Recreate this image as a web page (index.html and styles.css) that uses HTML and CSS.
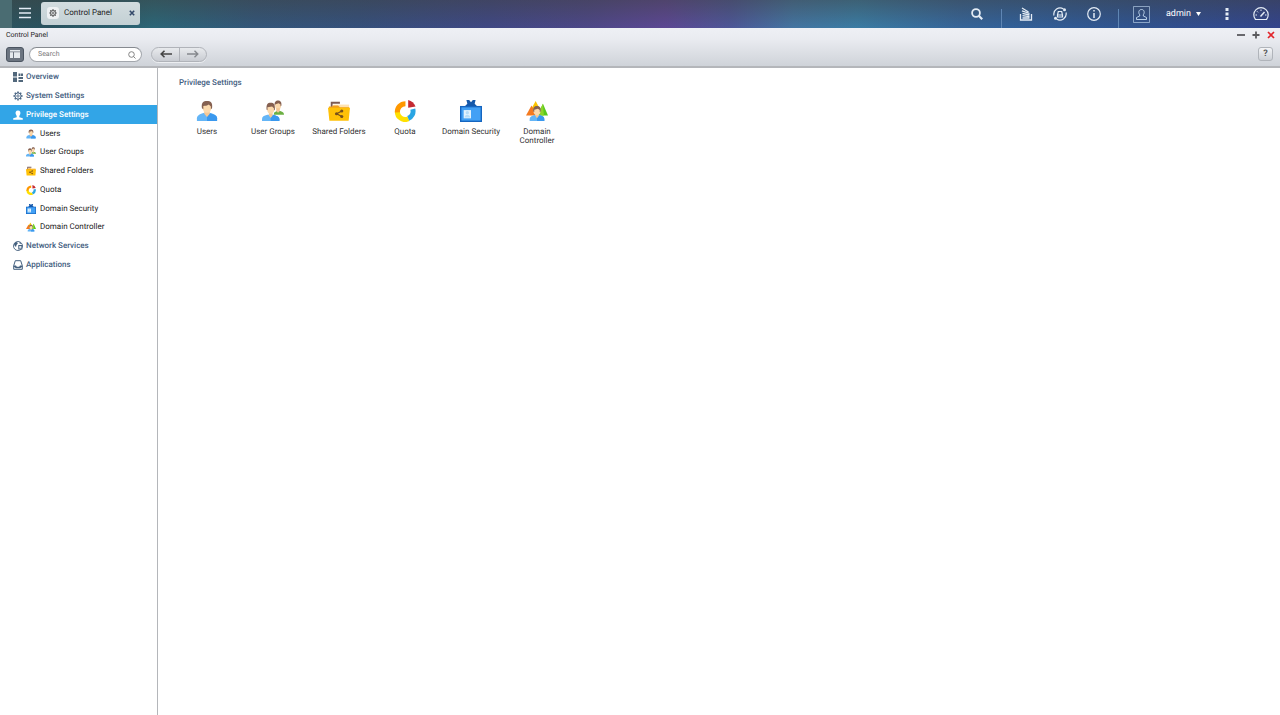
FILE: index.html
```html
<!DOCTYPE html>
<html lang="en">
<head>
<meta charset="utf-8">
<title>Control Panel</title>
<link rel="stylesheet" href="styles.css">
</head>
<body>
<svg class="sprite" aria-hidden="true">
  <symbol id="gear" viewBox="0 0 24 24">
    <g fill="none" stroke="currentColor"><circle cx="12" cy="12" r="7.5" stroke-width="2.4"/><circle cx="12" cy="12" r="2.8" stroke-width="2"/>
    <path stroke-width="3.6" d="M12 1v3.500M12 19.500V23M1 12h3.500M19.500 12H23M4.200 4.200l2.500 2.500M17.300 17.300l2.500 2.500M4.200 19.800l2.500-2.500M17.300 6.700l2.500-2.500"/></g>
  </symbol>
  <symbol id="user" viewBox="0 0 24 24">
    <path fill="#64b5f6" d="M1 23v-3c0-3 3-4.500 8-6h6c5 1.500 8 3 8 6v3z"/>
    <path fill="#3a98ee" d="M12 18l3-3.500c5 1.500 8 2.500 8 5.500v3H12z"/>
    <path fill="#f5c795" d="M9 11h6v4l-3 3.500L9 15z"/>
    <ellipse cx="12" cy="8" rx="5" ry="6" fill="#fbd9ac"/>
    <path fill="#856050" d="M6.500 9C5.500 3 8 1 12 1s6.500 2 5.500 8l-1.300 1V7L14 5c-2 1.500-4 1.300-6 1.500V10z"/>
  </symbol>
  <symbol id="group" viewBox="0 0 24 24">
    <path fill="#6cb043" d="M13 16v-2l3-2h4c3 1 4 2 4 4z"/>
    <ellipse cx="17.500" cy="6" rx="3.300" ry="4.500" fill="#fbd9ac"/><path fill="#f5c795" d="M15.500 9h4v3l-2 2-2-2z"/>
    <path fill="#856050" d="M13.800 6C13.400 2 15 .5 17.500.5S21.600 2 21.200 6l-1 1V5l-2-1.500-3.400 1z"/>
    <path fill="#64b5f6" d="M0 23v-2c0-3 2-4 6-5h6c4 1 7 2 7 5v2z"/><path fill="#3a98ee" d="M9.500 19l2.500-3c4 1 7 2 7 5v2H9.500z"/>
    <path fill="#f5c795" d="M7.500 13h4v4l-2 2.500-2-2.500z"/><ellipse cx="9.500" cy="10" rx="4" ry="5" fill="#fbd9ac"/>
    <path fill="#856050" d="M5 10.500C4.500 5 6 3 9.500 3S14.500 5 14 10.500l-1 1V9l-2-2-5 1v3z"/>
  </symbol>
  <symbol id="folder" viewBox="0 0 24 24">
    <path fill="#7d5b52" d="M3 2h10v2H5v5H3z"/><path fill="#ffe2b0" d="M6 5h17v6H6z"/><path fill="#f2a01e" d="M1 7h4v-1h6l2 2h10v3H1z"/>
    <path fill="#ffc107" d="M0 8.500h24L22.500 22.500h-21z"/>
    <path stroke="#76501c" stroke-width="1.300" d="M15 12L9.500 15l5.500 3" fill="none"/><g fill="#76501c"><circle cx="15" cy="12" r="1.700"/><circle cx="9.300" cy="15" r="1.700"/><circle cx="15" cy="18" r="1.700"/></g>
  </symbol>
  <symbol id="quota" viewBox="0 0 24 24">
    <g fill="none" stroke-width="5.500"><path stroke="#ffe000" d="M3.700 12a8.500 8.500 0 0 0 12 8.500"/><path stroke="#ff9800" d="M3.700 13.500A8.800 8.800 0 0 1 12.500 4"/><path stroke="#29a5e3" d="M15.500 20A8.500 8.500 0 0 0 20.500 10"/></g>
    <path fill="#c42a32" d="M15.500 0a12 12 0 0 1 8 7l-8 1.500z"/>
  </symbol>
  <symbol id="badge" viewBox="0 0 24 24">
    <path fill="#1558aa" d="M7 0h3l2 2.500L14 0h3l-1 4 3 3v2H5V7l3-3z"/><path fill="#1565c0" d="M0 6.500h24V24H0z"/><path fill="#42a0f5" d="M1.500 8h21v14.500h-21z"/>
    <path fill="#e2f2fd" d="M4 11h8v9H4z"/><circle cx="8" cy="13.800" r="1.800" fill="#b6dcf8"/><path fill="#b6dcf8" d="M5 19c0-4 6-4 6 0z"/>
  </symbol>
  <symbol id="domain" viewBox="0 0 24 24">
    <path fill="#fbc400" d="M10.500 1l7.500 14H3z"/><path fill="#f47a20" d="M6 6l6 11H0z"/><path fill="#58c91c" d="M18.500 4L24 17H12z"/><path fill="#8bd52a" d="M14.500 12l4-8 1 13h-5z"/>
    <path fill="#64b5f6" d="M4 23v-2c0-3 3-4 6-5h4c3 1 6 2 6 5v2z"/><path fill="#3a98ee" d="M12 20l3-3.500c4 1 5 2 5 4.500v2h-8z"/><path fill="#f5c795" d="M10 14h4v3l-2 3-2-3z"/>
    <ellipse cx="12" cy="12" rx="3.800" ry="4.500" fill="#fbd9ac"/><path fill="#856050" d="M8 12.500C7.500 8 9 6.500 12 6.500s4.500 1.500 4 6l-1 .5v-2l-2-1.500-4 1v2.500z"/>
  </symbol>
</svg>

<header class="topbar">
  <div class="topbar-edge"></div>
  <button class="bar-btn menu-btn" aria-label="Main menu"><svg viewBox="0 0 12 12"><path d="M0 1.500h12M0 6h12M0 10.500h12" stroke="currentColor" stroke-width="1.400"/></svg></button>
  <div class="task">
    <span class="task-icon"><svg><use href="#gear"/></svg></span>
    <span class="task-name">Control Panel</span>
    <button class="task-close" aria-label="Close Control Panel"><svg viewBox="0 0 6 6"><path d="M.8.8l4.400 4.400M5.200.8L.8 5.200" stroke="currentColor" stroke-width="1.600"/></svg></button>
  </div>
  <nav class="tray" aria-label="Desktop tools">
    <button class="bar-btn tool" aria-label="Search"><svg class="i12" viewBox="0 0 12 12"><g fill="none" stroke="currentColor"><circle cx="5" cy="5" r="3.900" stroke-width="1.800"/><path d="M7.800 7.800l3.400 3.400" stroke-width="2.200"/></g></svg></button>
    <span class="divider"></span>
    <div class="tools">
      <button class="bar-btn tool" aria-label="Background tasks"><svg class="i14" viewBox="0 0 14 14"><g fill="none" stroke="currentColor" stroke-width="1.300"><path d="M1.500 7v6h11V7"/><path d="M3.500 11h7M3.500 8.700l7 .9M3.500 6.300l7 1.700M3 3.800l7.500 2.700M3 1l6.500 4"/></g></svg></button>
      <button class="bar-btn tool" aria-label="External devices"><svg class="i14" viewBox="0 0 14 14"><g fill="none" stroke="currentColor" stroke-width="1.200"><path d="M1 8.500A6.200 6.200 0 0 1 10.500 2M13 5.500A6.200 6.200 0 0 1 3.500 12M4.500 8l.8-3.500h3.400L9.500 8v2h-5zM4.500 8h5"/></g><circle cx="11.500" cy="2.800" r="1.500" fill="currentColor"/><circle cx="2.500" cy="11.200" r="1.500" fill="currentColor"/></svg></button>
      <button class="bar-btn tool" aria-label="Notifications"><svg class="i14" viewBox="0 0 14 14"><circle cx="7" cy="7" r="6.300" fill="none" stroke="currentColor" stroke-width="1.200"/><path d="M7 6v5M7 3v1.600" stroke="currentColor" stroke-width="1.500"/></svg></button>
    </div>
    <span class="divider"></span>
    <button class="bar-btn account"><svg class="i17" viewBox="0 0 17 17"><g fill="none" stroke="currentColor"><path d="M.5.5h16v16H.5z" opacity=".6"/><path d="M3.500 13.500v-2l3.200-1.500V8.800C5.200 7 5.500 3.500 8.500 3.500s3.300 3.500 1.800 5.300V10l3.200 1.500v2z" opacity=".9"/></g></svg><span>admin</span><svg class="caret" viewBox="0 0 5 4"><path d="M0 0h5L2.500 4z" fill="currentColor"/></svg></button>
    <button class="bar-btn more" aria-label="More"><svg class="dots" viewBox="0 0 4 12"><path d="M.5 0h3v3h-3zM.5 4.500h3v3h-3zM.5 9h3v3h-3z" fill="currentColor"/></svg></button>
    <button class="bar-btn" aria-label="Dashboard"><svg class="i16" viewBox="0 0 16 14"><g fill="none" stroke="currentColor"><path d="M2.500 12.500a7.200 7.200 0 1 1 11 0z" stroke-width="1.200"/><path d="M7.500 9.500L11.500 5" stroke-width="1.500"/><path d="M8 2.500v1.500M4 4.300l1 1M2.500 8H4M12 8h1.500" /></g></svg></button>
  </nav>
</header>

<section class="window">
  <div class="window-head">
    <div class="titlebar">
      <h1>Control Panel</h1>
      <div class="window-controls">
        <button aria-label="Minimize"><svg viewBox="0 0 8 8"><path d="M0 4h8" stroke="currentColor" stroke-width="1.800"/></svg></button>
        <button aria-label="Maximize"><svg viewBox="0 0 8 8"><path d="M.5 4h7M4 .5v7" stroke="currentColor" stroke-width="1.800"/></svg></button>
        <button class="close" aria-label="Close"><svg viewBox="0 0 8 8"><path d="M1 1l6 6M7 1L1 7" stroke="currentColor" stroke-width="1.700"/></svg></button>
      </div>
    </div>
    <div class="toolbar">
      <button class="layout-btn" aria-label="Toggle sidebar"><svg viewBox="0 0 10 8"><path fill="#e4e9ee" d="M0 0h10v8H0z"/><path fill="#6b7480" d="M3 2h1v6H3zM0 1.500h10v.7H0z"/></svg></button>
      <label class="search"><input type="search" placeholder="Search" aria-label="Search"><svg viewBox="0 0 8 8"><g fill="none" stroke="currentColor" stroke-width=".9"><circle cx="3.500" cy="3.500" r="2.800"/><path d="M5.500 5.500l2 2"/></g></svg></label>
      <div class="history">
        <button aria-label="Back"><svg viewBox="0 0 12 8"><path d="M12 4H1.500M4.500.8L1.200 4l3.300 3.200" fill="none" stroke="currentColor" stroke-width="1.600"/></svg></button>
        <button class="forward" aria-label="Forward"><svg viewBox="0 0 12 8"><path d="M0 4h10.500M7.500.8L10.800 4 7.500 7.200" fill="none" stroke="currentColor" stroke-width="1.400"/></svg></button>
      </div>
      <button class="help" aria-label="Help">?</button>
    </div>
  </div>

  <div class="window-body">
    <nav class="sidebar" aria-label="Settings">
      <div class="rows">
        <a href="#" class="row"><svg viewBox="0 0 10 10"><path fill="#52687c" d="M0 0h4v4.500H0zM5.500 1.500h2v2.500h-2zM8 1.500h2v2.500H8zM0 5.500h4V10H0zM5.500 5h4.500v2H5.500zM5.500 8h4.500v2H5.500z"/></svg>Overview</a>
        <a href="#" class="row"><svg><use href="#gear"/></svg>System Settings</a>
        <a href="#" class="row active" aria-current="page"><svg viewBox="0 0 10 10"><path fill="#fff" d="M5 .5c2.300 0 2.700 2 2.300 3.500L6.300 6v1.200l3.500 1v1.600H.2V8.200l3.500-1V6L2.700 4C2.300 2.500 2.700.5 5 .5z"/></svg>Privilege Settings</a>
        <a href="#" class="row sub"><svg><use href="#user"/></svg>Users</a>
        <a href="#" class="row sub"><svg><use href="#group"/></svg>User Groups</a>
        <a href="#" class="row sub"><svg><use href="#folder"/></svg>Shared Folders</a>
        <a href="#" class="row sub"><svg><use href="#quota"/></svg>Quota</a>
        <a href="#" class="row sub"><svg><use href="#badge"/></svg>Domain Security</a>
        <a href="#" class="row sub"><svg><use href="#domain"/></svg>Domain Controller</a>
        <a href="#" class="row"><svg viewBox="0 0 10 10"><circle cx="5" cy="5" r="4.500" fill="none" stroke="currentColor" stroke-width=".9"/><path fill="currentColor" d="M1 3l1-1.500L4 1l.8 1.500L3.500 4 3 6 1.500 4.500zM6 1l2.500 1.200L7 3zM5.300 4h4v4.500h-4z"/><path d="M6.200 5h2.200v2.500H6.200z" fill="#dfe5ea"/></svg>Network Services</a>
        <a href="#" class="row"><svg viewBox="0 0 10 10"><path fill="none" stroke="currentColor" d="M2.300.7h5.400l1.600 5v3.600H.7V5.700z"/><path fill="currentColor" d="M.7 5.500H3l.8 1.300h2.400L7 5.500h2.300v1.200L7 8.300H3L.7 6.700z"/></svg>Applications</a>
      </div>
    </nav>
    <main class="content">
      <h2>Privilege Settings</h2>
      <div class="tiles">
        <a href="#" class="tile"><svg><use href="#user"/></svg>Users</a>
        <a href="#" class="tile"><svg><use href="#group"/></svg>User Groups</a>
        <a href="#" class="tile"><svg><use href="#folder"/></svg>Shared Folders</a>
        <a href="#" class="tile"><svg><use href="#quota"/></svg>Quota</a>
        <a href="#" class="tile"><svg><use href="#badge"/></svg>Domain Security</a>
        <a href="#" class="tile"><svg><use href="#domain"/></svg>Domain Controller</a>
      </div>
    </main>
  </div>
</section>
</body>
</html>
```
FILE: styles.css
```css
* { box-sizing: border-box; }
body {
  margin: 0;
  min-height: 100vh;
  display: flex;
  flex-direction: column;
  background: #fff;
  color: #333;
  font: 8px/10px Roboto, "Liberation Sans", sans-serif;
  text-rendering: geometricPrecision;
}
button { border: 0; padding: 0; background: none; color: inherit; font: inherit; text-rendering: inherit; display: flex; align-items: center; justify-content: center; }
a { color: inherit; text-decoration: none; }
h1, h2 { margin: 0; font-size: inherit; }
.sprite { position: absolute; width: 0; height: 0; }

.topbar {
  height: 28px;
  display: flex;
  align-items: center;
  color: #e4ecf5;
  background:
    linear-gradient(rgba(64, 64, 60, .45), rgba(64, 64, 60, 0)),
    linear-gradient(90deg, #2d5560 0%, #28525f 4%, #2b6678 12%, #33567a 20%, #35507c 28%, #3f4884 38%, #4d4788 46%, #5c4794 52%, #4d5698 57%, #4375a2 62%, #3a7ca4 67%, #36659a 75%, #31609a 79%, #2f5491 88%, #32448d 100%);
}
.topbar-edge { width: 12px; align-self: stretch; background: #4a6c72; }
.menu-btn { width: 29px; padding: 0 3px 3px 0; height: 24px; }
.menu-btn svg { width: 12px; height: 12px; }
.task {
  width: 99px;
  height: 23px;
  margin-bottom: 2px;
  display: flex;
  align-items: center;
  padding: 0 5px 0 6px;
  border-radius: 3px;
  background: linear-gradient(#d2dcdf, #c3d0d4);
  color: #222;
}
.task-icon { width: 12px; height: 12px; padding: 2px; border-radius: 3px; background: #eef1f3; display: flex; color: #444; }
.task-icon svg { width: 8px; height: 8px; }
.task-name { margin-left: 5px; }
.task-close { margin-left: auto; color: #34496a; }
.task-close svg { width: 6px; height: 6px; }
.tray { margin-left: auto; display: flex; align-items: center; padding-right: 11px; gap: 14px; }
.tools { display: flex; gap: 14px; }
.tool { width: 20px; }
.more { width: 24px; }
.divider { width: 1px; height: 19px; margin-top: 9px; background: #5f86b4; }
.i12 { width: 12px; height: 12px; }
.i14 { width: 14px; height: 14px; }
.i16 { width: 16px; height: 14px; }
.i17 { width: 17px; height: 17px; }
.account { font-size: 9px; color: #fff; }
.account .i17 { color: #c5dcf2; }
.account span { margin: 0 5px 0 16px; }
.caret { width: 5px; height: 4px; }
.dots { width: 4px; height: 12px; }

.window { flex: 1; display: flex; flex-direction: column; }
.window-head { background: linear-gradient(#eef0f5 0, #e9ebf0 30%, #cfd3d9 100%); border-bottom: 2px solid #b4b6ba; padding-bottom: 4px; }
.titlebar { height: 14px; display: flex; align-items: center; justify-content: space-between; padding: 0 5px 0 6px; }
.titlebar h1 { font-size: 7px; font-weight: 400; color: #222; }
.window-controls { display: flex; gap: 7px; color: #5a5a5e; }
.window-controls svg { width: 8px; height: 8px; }
.window-controls .close { color: #e2262c; }
.toolbar { display: flex; align-items: center; height: 20px; padding: 4px 7px 0 6px; }
.layout-btn { width: 18px; height: 15px; border-radius: 3px; border: 1px solid #4c5561; background: #6b7480; }
.layout-btn svg { width: 10px; height: 8px; }
.search { position: relative; margin-left: 5px; width: 113px; height: 15px; display: flex; }
.search input { width: 100%; padding: 0 18px 0 8px; border: 1px solid #a3a7ad; border-top-color: #868a90; border-radius: 8px; background: #fff; font: inherit; font-size: 7px; text-rendering: inherit; color: #333; appearance: none; }
.search input::placeholder { color: #777; opacity: 1; }
.search svg { position: absolute; right: 6px; top: 4px; width: 8px; height: 8px; color: #777; }
.history { margin-left: 9px; display: flex; height: 15px; border: 1px solid #b0b3b9; border-radius: 8px; background: linear-gradient(#e8eaed, #c9ccd2); box-shadow: 0 1px 0 #eceef1; }
.history button { width: 27px; color: #444; }
.history button + button { border-left: 1px solid #b0b3b9; color: #85888d; }
.history svg { width: 12px; height: 8px; }
.help { margin-left: auto; width: 15px; height: 14px; border: 1px solid #b0b4ba; border-radius: 3px; background: linear-gradient(#f4f5f7, #ccd0d6); color: #555; font-size: 9px; font-weight: 700; }

.window-body { flex: 1; display: flex; }
.sidebar { width: 158px; border-right: 1px solid #b4b6ba; }
.rows { height: 206px; display: flex; flex-direction: column; }
.row { flex: 1; display: flex; align-items: center; gap: 3px; padding-left: 13px; color: #44607f; font-weight: 500; }
.row svg { width: 10px; height: 10px; }
.row.sub { gap: 4px; padding-left: 26px; color: #222; font-weight: 400; }
.row.active { background: #32a5e7; color: #fff; }
.content { flex: 1; padding: 10px 16px; }
.content h2 { font-weight: 500; color: #44607f; padding-left: 5px; }
.tiles { display: flex; flex-wrap: wrap; margin-top: 12px; }
.tile { width: 66px; padding: 0 2px; display: flex; flex-direction: column; align-items: center; text-align: center; line-height: 9px; }
.tile svg { width: 22px; height: 22px; margin-bottom: 5px; }
```
